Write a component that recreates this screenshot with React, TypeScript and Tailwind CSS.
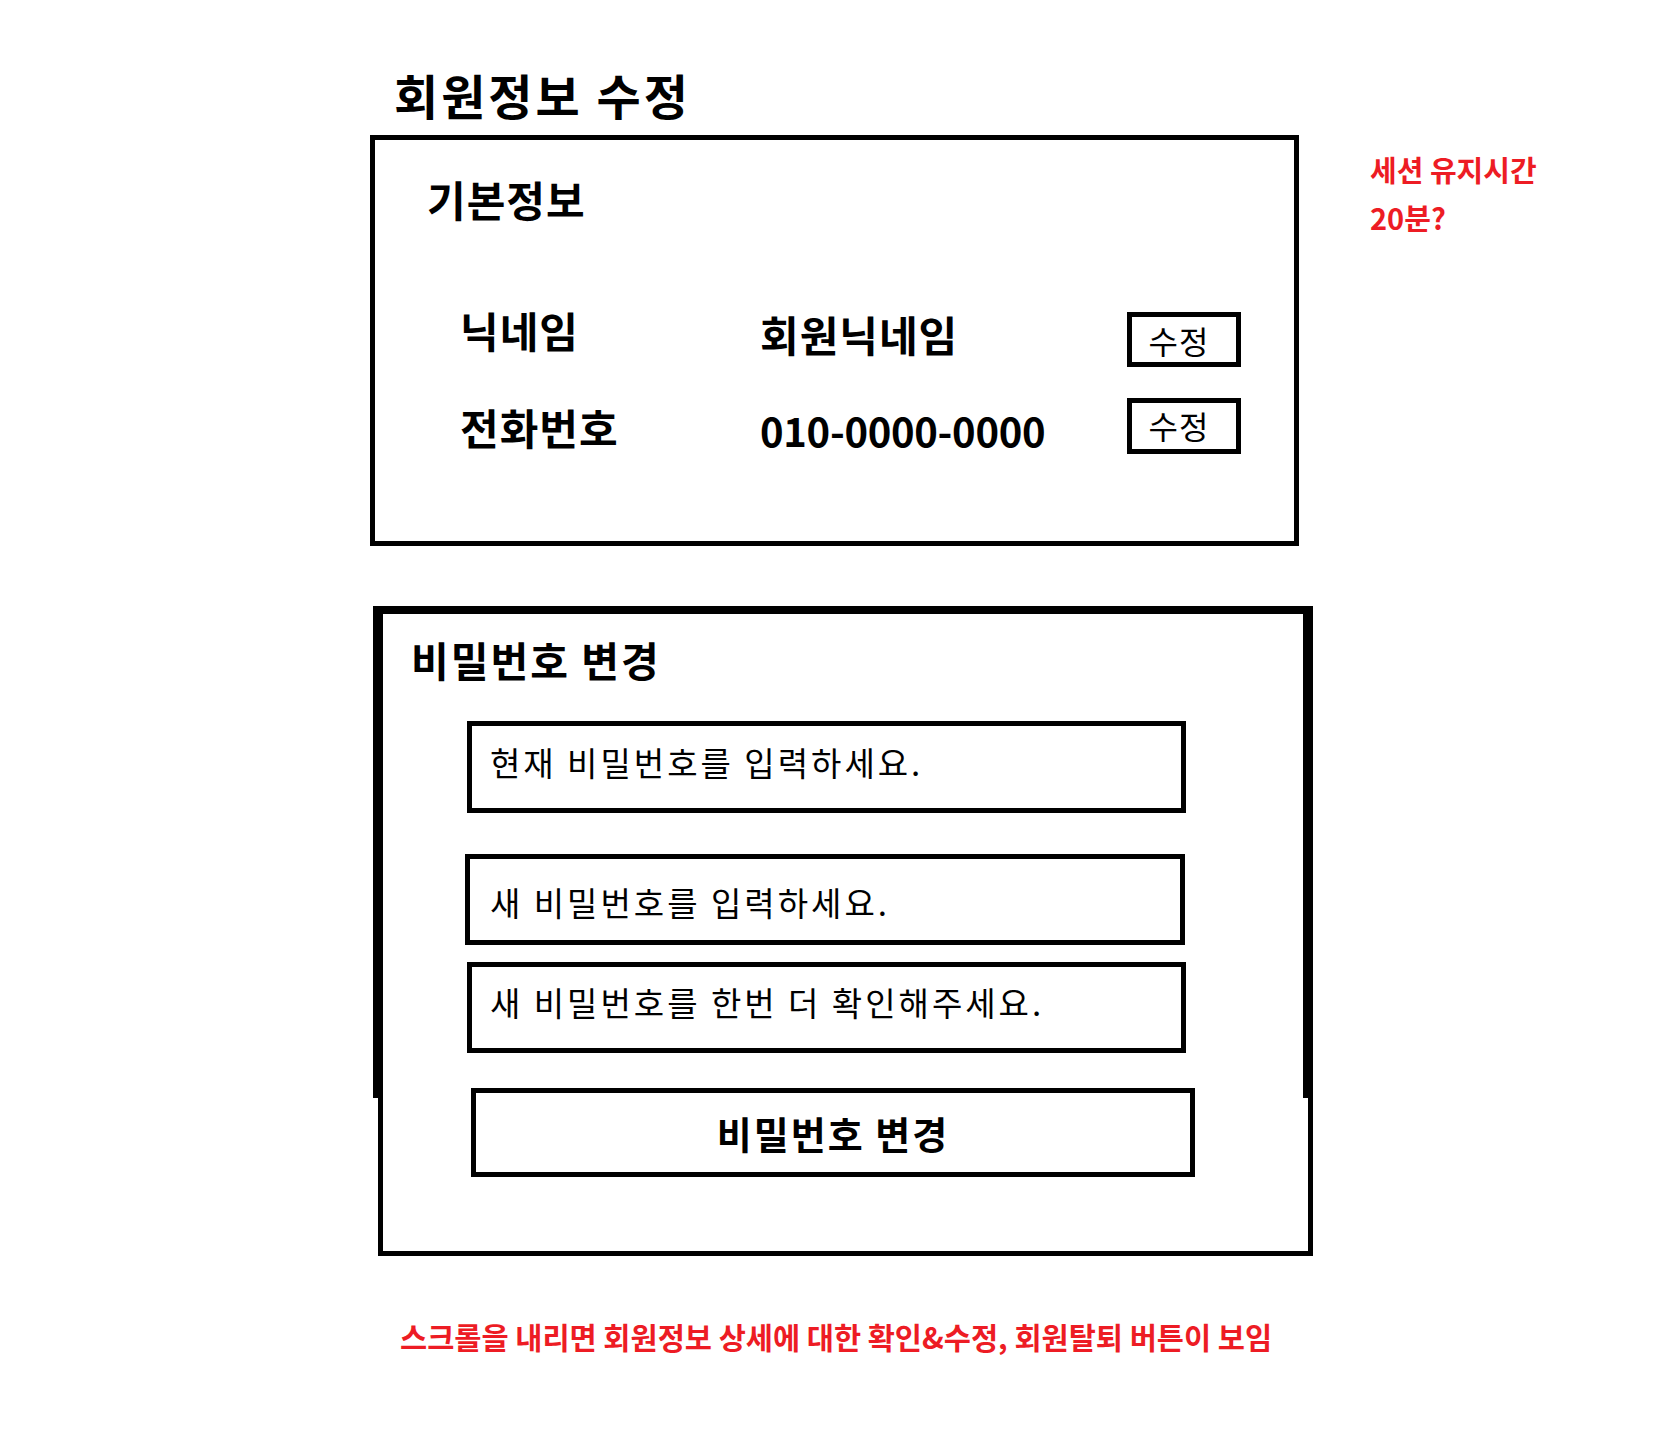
import React from "react";

const font = "font-['Noto_Sans_CJK_KR','Noto_Sans',sans-serif]";

export default function App() {
  return (
    <div className={`min-h-[1440px] w-[1660px] bg-white text-black flex items-start ${font}`}>
      <div className="ml-[370px] w-[943px] flex flex-col items-start pt-[70px]">
        <h1 className="ml-[24px] text-[48px] leading-none font-bold tracking-[3px]">회원정보 수정</h1>

        <section className="mt-[17px] w-[929px] h-[411px] border-[5px] border-black pt-[38px] pl-[52px]">
          <h2 className="text-[42px] leading-none font-bold tracking-[1px]">기본정보</h2>
          <div className="mt-[86px] pl-[33px] flex flex-col gap-[31px]">
            <div className="flex items-start">
              <div className="w-[300px] mt-[3px] text-[42px] leading-none font-bold tracking-[1px]">닉네임</div>
              <div className="w-[367px] mt-[7px] text-[42px] leading-none font-bold tracking-[1px]">회원닉네임</div>
              <button className="mt-[6px] w-[114px] h-[55px] border-[5px] border-black flex items-center justify-center pr-[10px] text-[32px] leading-none font-normal tracking-[1px]">
                수정
              </button>
            </div>
            <div className="flex items-start">
              <div className="w-[300px] mt-[8px] text-[42px] leading-none font-bold tracking-[1px]">전화번호</div>
              <div className="w-[367px] mt-[12px] text-[40px] leading-none font-bold tracking-[-0.3px]">010-0000-0000</div>
              <button className="w-[114px] h-[56px] border-[5px] border-black flex items-center justify-center pr-[10px] pb-[2px] text-[32px] leading-none font-normal tracking-[1px]">
                수정
              </button>
            </div>
          </div>
        </section>

        <section className="relative mt-[60px] ml-[8px] w-[935px] h-[650px] border-[5px] border-t-[8px] border-black pt-[25px] pl-[28px]">
          <div className="absolute -left-[10px] -top-[8px] w-[10px] h-[492px] bg-black" />
          <div className="absolute -right-[5px] -top-[8px] w-[10px] h-[492px] bg-black" />
          <h2 className="text-[41px] leading-none font-bold tracking-[2px]">비밀번호 변경</h2>
          <div className="-ml-[28px] flex flex-col items-start">
            <div className="mt-[41px] ml-[84px] w-[719px] h-[92px] border-[5px] border-black flex items-center pl-[18px] pb-[10px] text-[33px] leading-none tracking-[3px]">
              현재 비밀번호를 입력하세요.
            </div>
            <div className="mt-[41px] ml-[82px] w-[720px] h-[91px] border-[5px] border-black flex items-center pl-[20px] pt-[6px] text-[33px] leading-none tracking-[3px]">
              새 비밀번호를 입력하세요.
            </div>
            <div className="mt-[17px] ml-[84px] w-[719px] h-[91px] border-[5px] border-black flex items-center pl-[18px] pb-[10px] text-[33px] leading-none tracking-[3px]">
              새 비밀번호를 한번 더 확인해주세요.
            </div>
            <button className="mt-[35px] ml-[88px] w-[724px] h-[89px] border-[5px] border-black flex items-center justify-center text-[38px] leading-none font-bold tracking-[2px]">
              비밀번호 변경
            </button>
          </div>
        </section>

        <p className="mt-[66px] ml-[30px] text-[29.5px] leading-none font-bold tracking-[0px] text-[#ed1c24]">
          스크롤을 내리면 회원정보 상세에 대한 확인&amp;수정, 회원탈퇴 버튼이 보임
        </p>
      </div>

      <aside className="ml-[57px] pt-[145px] text-[29px] leading-[48px] font-bold text-[#ed1c24]">
        <div>세션 유지시간</div>
        <div>20분?</div>
      </aside>
    </div>
  );
}
